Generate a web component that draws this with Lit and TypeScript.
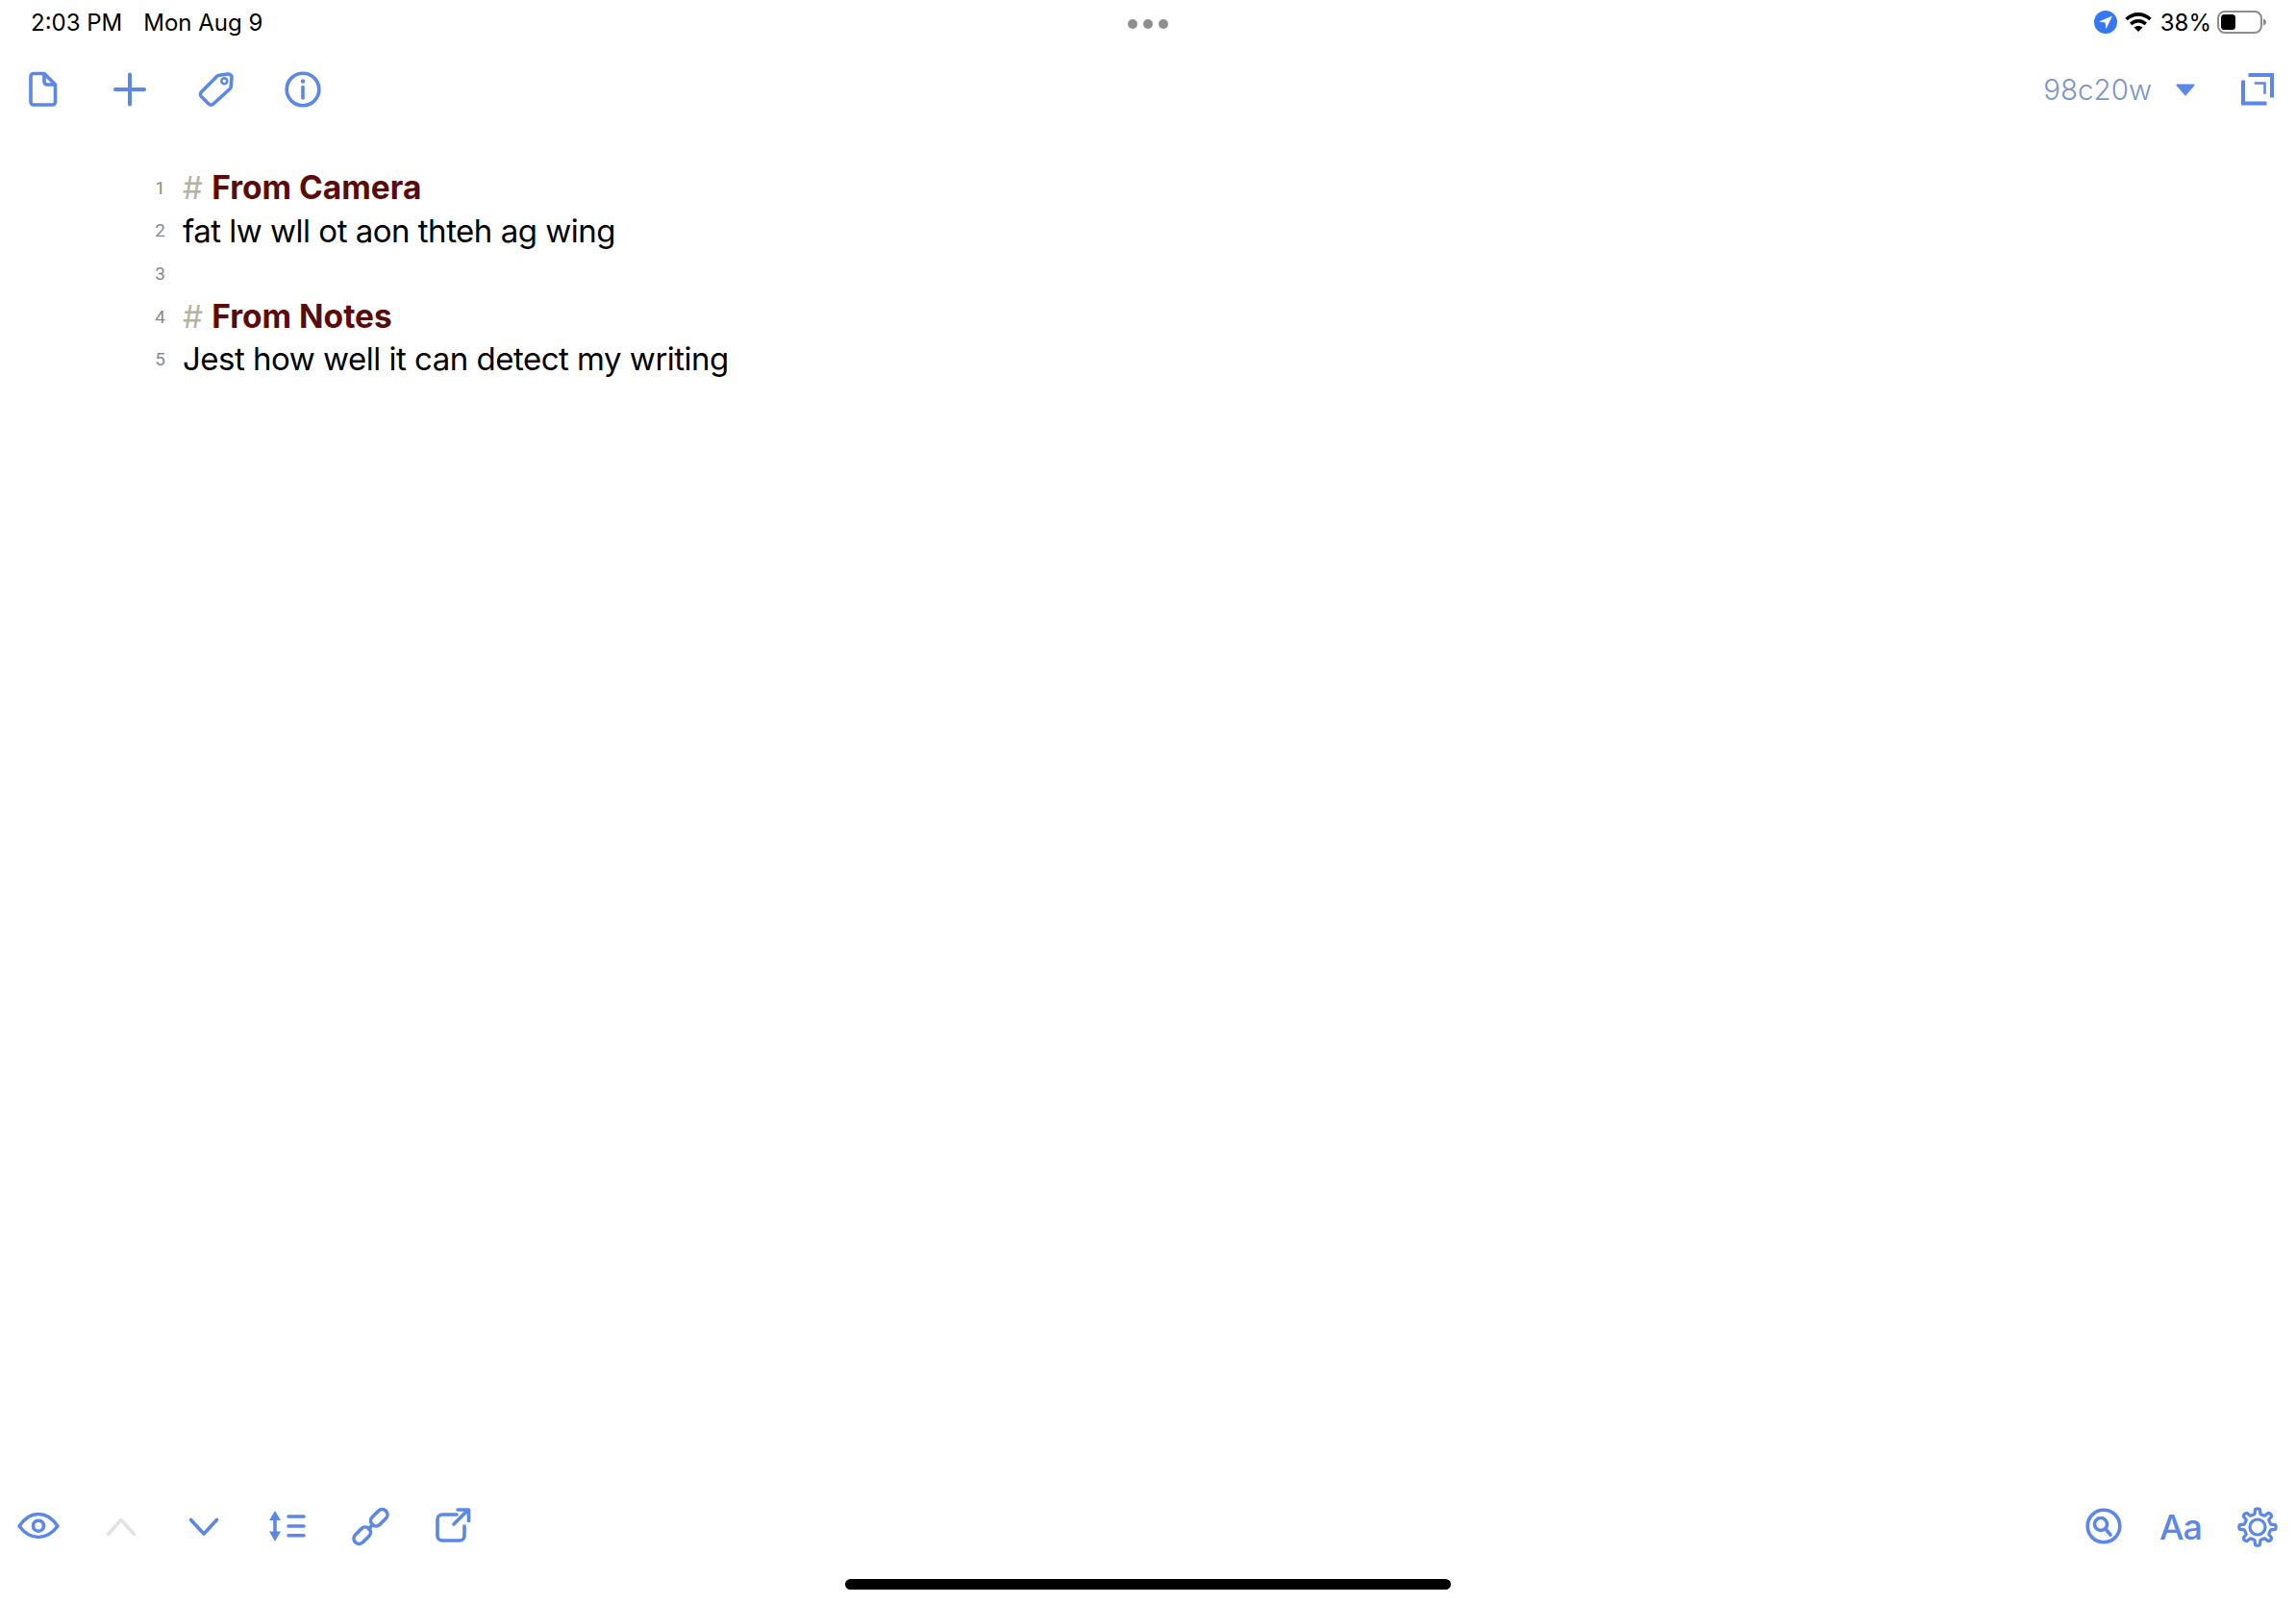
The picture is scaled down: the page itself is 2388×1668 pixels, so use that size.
import { LitElement, html, css, svg } from 'lit';
import { customElement } from 'lit/decorators.js';

// every icon uses its screen position as viewBox, easier to compare with the reference
const icon = (x: number, y: number, w: number, h: number, body: unknown) => html`
  <svg class="icon" width=${w} height=${h} viewBox="${x} ${y} ${w} ${h}">${body}</svg>
`;

const gearPath = (cx: number, cy: number) => {
  const outer = 18.5;
  const inner = 14;
  const teeth = 8;
  const pts: string[] = [];
  for (let i = 0; i < teeth; i++) {
    const a = (i * Math.PI * 2) / teeth - Math.PI / 2;
    const step = (Math.PI * 2) / teeth;
    const at = (r: number, d: number) =>
      `${(cx + r * Math.cos(a + d)).toFixed(2)} ${(cy + r * Math.sin(a + d)).toFixed(2)}`;
    pts.push(`${i === 0 ? 'M' : 'L'}${at(inner, -step * 0.27)}`);
    pts.push(`L${at(outer, -step * 0.17)}`);
    pts.push(`Q${at(outer + 1.6, 0)} ${at(outer, step * 0.17)}`);
    pts.push(`L${at(inner, step * 0.27)}`);
    pts.push(`Q${at(inner - 0.6, step * 0.5)} ${at(inner, step * 0.73)}`);
  }
  return pts.join(' ') + 'Z';
};

const icons = {
  doc: icon(29, 73, 32, 40, svg`
    <path d="M35 76.5H46L57.5 88V106a3 3 0 0 1-3 3H35a3 3 0 0 1-3-3V79.5a3 3 0 0 1 3-3Z" />
    <path d="M46 77V85a3 3 0 0 0 3 3H57" />`),
  plus: icon(116, 74, 38, 38, svg`<path stroke-width="4" d="M135 77.5V108.5M120 93H150" />`),
  tag: icon(204, 73, 40, 40, svg`
    <path d="M208.5 95.5L224.5 79.5a4 4 0 0 1 2.5-1.2L236 77a3.5 3.5 0 0 1 4 4L239.2 90a4 4 0 0 1-1.2 2.5L221 108a3.5 3.5 0 0 1-5 0L208.5 100.5a3.5 3.5 0 0 1 0-5Z" />
    <circle cx="232.3" cy="84.3" r="3" stroke-width="2.5" />`),
  info: icon(295, 73, 40, 40, svg`
    <circle cx="315" cy="93" r="16.8" />
    <circle class="solid" cx="315" cy="84.5" r="2.2" />
    <path d="M315 90.5V102" />`),
  expand: icon(2329, 74, 38, 38, svg`
    <path class="square" stroke-width="4" d="M2340.5 78H2363V99.5M2333 85.5V107.5H2355.5" />
    <path class="square" stroke-width="2.5" d="M2346 86.5H2355.5V96.5" />`),
  eye: icon(16, 1570, 48, 36, svg`
    <path d="M20 1587C26 1578 33 1574.5 40 1574.5S54 1578 60 1587C54 1595 47 1598.5 40 1598.5S26 1595 20 1587Z" />
    <circle cx="40" cy="1586.7" r="5.5" />`),
  up: icon(108, 1576, 36, 24, svg`<path class="off" d="M112.5 1595.5L126 1580.5L139.5 1595.5" />`),
  down: icon(194, 1576, 36, 24, svg`<path d="M198.5 1580.5L212 1595L225.5 1580.5" />`),
  lines: icon(277, 1569, 42, 38, svg`
    <path class="solid" stroke="none" d="M285 1571L291 1581H279ZM285 1603L279 1592.5H291Z" />
    <path d="M285 1580V1594" stroke-linecap="butt" />
    <path d="M299 1577H315M299 1587H315M299 1596.7H315" />`),
  link: icon(363, 1567, 42, 42, svg`
    <rect x="383.3" y="1572.8" width="20" height="11" rx="5.5" transform="rotate(-45 393.3 1578.3)" />
    <rect x="365.7" y="1591.2" width="20" height="11" rx="5.5" transform="rotate(-45 375.7 1596.7)" />
    <path d="M382.5 1590L386.5 1585.5" />`),
  share: icon(451, 1566, 40, 44, svg`
    <path d="M475 1575H460a5 5 0 0 0-5 5V1597a5 5 0 0 0 5 5H478a5 5 0 0 0 5-5V1587" />
    <path d="M472 1585L486 1571M476 1570H487.5V1581.5" />`),
  search: icon(2168, 1567, 40, 42, svg`
    <circle cx="2188" cy="1587" r="16.8" />
    <circle cx="2185" cy="1585" r="6.5" />
    <path d="M2190 1590L2195 1596" />`),
  gear: icon(2326, 1566, 44, 44, svg`
    <path stroke-width="3.2" d=${gearPath(2348, 1588)} />
    <circle cx="2348" cy="1588" r="8" stroke-width="3.2" />`),
};

@customElement('app-root')
export class AppRoot extends LitElement {
  static styles = css`
    :host {
      display: flex;
      flex-direction: column;
      height: 1668px;
      background: #fff;
      color: #000;
      font-family: Inter, 'Liberation Sans', sans-serif;
      overflow: hidden;
    }

    .status {
      display: grid;
      grid-template-columns: 1fr auto 1fr;
      align-items: center;
      height: 46px;
      font-size: 24px;
      flex: none;
    }
    .clock {
      display: flex;
      gap: 22px;
      padding-left: 32px;
    }
    .dots {
      display: flex;
      gap: 6px;
      padding-top: 4px;
    }
    .dots span {
      width: 10px;
      height: 10px;
      border-radius: 50%;
      background: #8e8e8e;
    }
    .system {
      display: flex;
      justify-content: flex-end;
      align-items: center;
      padding-right: 30px;
    }
    .system svg {
      display: block;
      flex: none;
    }
    .wifi {
      margin: 0 9px 0 8px;
    }
    .pct {
      margin-right: 6px;
    }

    .toolbar {
      display: flex;
      align-items: center;
      justify-content: space-between;
      flex: none;
    }
    .top {
      height: 94px;
    }
    .bottom {
      height: 80px;
      margin-top: auto;
    }
    .group {
      display: flex;
      align-items: center;
    }
    .top .btn {
      width: 90px;
    }
    .bottom .btn {
      width: 86.2px;
    }
    .bottom .left {
      margin-left: -3px;
    }
    .bottom .right .btn {
      width: 80px;
    }
    .btn {
      display: flex;
      justify-content: center;
      align-items: center;
      height: 60px;
      color: #5b87e8;
    }
    .aa {
      font-size: 36px;
      font-weight: 500;
      letter-spacing: -1px;
    }
    .note {
      font-size: 29.5px;
      font-weight: 300;
      color: #7b95c9;
      margin-right: 25px;
    }
    .caret {
      margin-right: 46px;
    }
    .expand {
      margin-right: 21px;
    }
    .icon {
      display: block;
      flex: none;
      overflow: visible;
      fill: none;
      stroke: #5b87e8;
      stroke-width: 3.6;
      stroke-linecap: round;
      stroke-linejoin: round;
    }
    .icon .solid {
      fill: #5b87e8;
      stroke: none;
    }
    .icon .off {
      stroke: #e3e3e3;
    }
    .icon .square {
      stroke-linecap: square;
      stroke-linejoin: miter;
    }

    .editor {
      display: grid;
      grid-template-columns: 172px 1fr;
      column-gap: 18px;
      grid-auto-rows: 44.6px;
      padding-top: 33px;
      font-size: 33px;
      align-items: center;
    }
    .num {
      text-align: right;
      font-family: Roboto, sans-serif;
      font-size: 19px;
      color: #8a8a8a;
    }
    .line {
      line-height: 44.6px;
      white-space: pre;
      min-height: 44.6px;
      letter-spacing: -0.5px;
    }
    .hash {
      color: #b6b2a2;
      font-weight: 400;
      letter-spacing: 0;
    }
    .head {
      color: #5c0b0b;
      font-size: 33.5px;
      font-weight: 700;
      letter-spacing: 0;
    }

    .home {
      height: 40px;
      padding-top: 14px;
      box-sizing: border-box;
      display: flex;
      justify-content: center;
      flex: none;
    }
    .home span {
      width: 630px;
      height: 11px;
      border-radius: 6px;
      background: #000;
    }
  `;

  lines = [
    { head: 'From Camera' },
    { text: 'fat lw wll ot aon thteh ag wing' },
    { text: '' },
    { head: 'From Notes' },
    { text: 'Jest how well it can detect my writing' },
  ];

  render() {
    return html`
      <div class="status">
        <div class="clock"><span>2:03 PM</span><span>Mon Aug 9</span></div>
        <div class="dots"><span></span><span></span><span></span></div>
        <div class="system">
          <svg width="24" height="24" viewBox="0 0 24 24">
            <circle cx="12" cy="12" r="12" fill="#3478f6" />
            <path d="M19 5.5L5 11.5L11.5 12.5L12.5 19Z" fill="#fff" />
          </svg>
          <svg class="wifi" width="28" height="22" viewBox="0 0 28 22" fill="none" stroke="#000" stroke-width="3.6">
            <path d="M1.5 8C9 1.2 19 1.2 26.5 8" />
            <path d="M6.2 12.8C11 8.8 17 8.8 21.8 12.8" />
            <path d="M14 21L9.5 16.6C12.2 14.6 15.8 14.6 18.5 16.6Z" fill="#000" stroke="none" />
          </svg>
          <span class="pct">38%</span>
          <svg width="52" height="24" viewBox="0 0 52 24">
            <rect x="1" y="1" width="45" height="22" rx="7" fill="none" stroke="#8e8e8e" stroke-width="2" />
            <rect x="4" y="4" width="15" height="16" rx="3.5" fill="#000" />
            <path d="M48 8.5C50 9 51 10.5 51 12S50 15 48 15.5Z" fill="#8e8e8e" />
          </svg>
        </div>
      </div>

      <div class="toolbar top">
        <div class="group">
          <div class="btn">${icons.doc}</div>
          <div class="btn">${icons.plus}</div>
          <div class="btn">${icons.tag}</div>
          <div class="btn">${icons.info}</div>
        </div>
        <div class="group">
          <span class="note">98c20w</span>
          <svg class="caret" width="20" height="13" viewBox="0 0 20 13">
            <path d="M1.5 0.5H18.5a1 1 0 0 1 .8 1.6L10.8 12a1 1 0 0 1-1.6 0L.7 2.1a1 1 0 0 1 .8-1.6Z" fill="#5b87e8" />
          </svg>
          <div class="expand">${icons.expand}</div>
        </div>
      </div>

      <div class="editor">
        ${this.lines.map(
          (l, i) => html`
            <div class="num">${i + 1}</div>
            <div class="line">${l.head
              ? html`<span class="hash"># </span><span class="head">${l.head}</span>`
              : l.text}</div>
          `,
        )}
      </div>

      <div class="toolbar bottom">
        <div class="group left">
          <div class="btn">${icons.eye}</div>
          <div class="btn">${icons.up}</div>
          <div class="btn">${icons.down}</div>
          <div class="btn">${icons.lines}</div>
          <div class="btn">${icons.link}</div>
          <div class="btn">${icons.share}</div>
        </div>
        <div class="group right">
          <div class="btn">${icons.search}</div>
          <div class="btn aa">Aa</div>
          <div class="btn">${icons.gear}</div>
        </div>
      </div>

      <div class="home"><span></span></div>
    `;
  }
}
